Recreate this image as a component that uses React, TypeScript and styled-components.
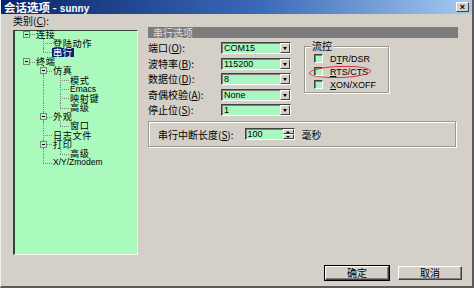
import { Fragment } from "react";
import styled, { createGlobalStyle, css } from "styled-components";

const Global = createGlobalStyle`
  html, body { margin: 0; padding: 0; background: #d4d0c8; }
  body { font-family: "Noto Sans CJK SC", "Liberation Sans", sans-serif; font-size: 10px; color: #000; }
`;

const Window = styled.div`
  position: relative;
  width: 474px; height: 288px; box-sizing: border-box;
  background: #d4d0c8;
  border-right: 2px solid #5a5a5a;
  border-bottom: 2px solid #5a5a5a;
  border-left: 1px solid #f0f0f0;
  display: flex; flex-direction: column;
`;

const TitleBar = styled.div`
  height: 14px; flex: none; overflow: hidden;
  background: linear-gradient(90deg, #0a246a 0%, #3a6ab8 55%, #a6caf0 100%);
  display: flex; align-items: center; padding: 0 3px 0 3px;
  color: #fff; font-weight: 700; font-size: 11.5px;
`;

const TitleText = styled.span`
  flex: 1; white-space: pre; line-height: 14px; height: 14px;
  .mono { font-family: "Liberation Mono", monospace; font-size: 10px; font-weight: 700; }
`;

const CloseBtn = styled.div`
  width: 13px; height: 10px; box-sizing: border-box;
  background: #d4d0c8; border: 1px solid; border-color: #fff #404040 #404040 #fff;
  display: flex; align-items: center; justify-content: center;
  color: #000; font-family: "Liberation Sans", sans-serif; font-size: 9px; font-weight: 700; line-height: 1;
`;

const Content = styled.div`
  display: flex; padding: 1px 0 0 12px;
`;

const LeftCol = styled.div`
  width: 125px; flex: none; display: flex; flex-direction: column;
`;

const Label = styled.div`
  height: 12px; line-height: 12px; margin-bottom: 3px; white-space: nowrap;
`;

const Tree = styled.div`
  height: 225px; box-sizing: border-box;
  background: #aafabe;
  border-left: 2px solid #2e4a36; border-top: 1px solid #2e4a36;
  border-right: 1px solid #f4f4f0; border-bottom: 1px solid #f4f4f0;
  padding: 0 0 0 3px;
`;

const TreeBody = styled.div`
  margin-top: -1.5px;
`;

const TreeRow = styled.div`
  display: flex; height: 9.2px; align-items: stretch;
`;

type Kind = "blank" | "pipe" | "tee" | "elbow" | "minus" | "minusTee";

const dots = "1px dotted #7a8a80";

const Cell = styled.div<{ $kind: Kind }>`
  width: 17px; flex: none; position: relative;
  ${({ $kind }) => ($kind === "pipe" || $kind === "tee" || $kind === "minusTee") && css`
    &::before { content: ""; position: absolute; left: 8px; top: 0; bottom: 0; border-left: ${dots}; }
  `}
  ${({ $kind }) => $kind === "elbow" && css`
    &::before { content: ""; position: absolute; left: 8px; top: 0; height: 50%; border-left: ${dots}; }
  `}
  ${({ $kind }) => $kind !== "blank" && $kind !== "pipe" && css`
    &::after { content: ""; position: absolute; left: 8px; right: 0; top: 50%; border-top: ${dots}; }
  `}
`;

const Expander = styled.span`
  position: absolute; z-index: 1; left: 5px; top: 1px;
  width: 7px; height: 7px; box-sizing: border-box;
  background: #aafabe; border: 1px solid #7a8a80;
  &::after { content: ""; position: absolute; left: 1px; right: 1px; top: 2px; border-top: 1px solid #000; }
`;

const ItemText = styled.span<{ $sel?: boolean; $latin?: boolean }>`
  display: flex; align-items: center; height: 9.2px; overflow: visible;
  padding: 0 1px; white-space: nowrap; line-height: 9px;
  font-family: ${({ $latin }) => ($latin ? '"Liberation Sans", sans-serif' : '"Noto Sans CJK SC", sans-serif')};
  font-size: ${({ $latin }) => ($latin ? "8.5px" : "9.2px")};
  letter-spacing: ${({ $latin }) => ($latin ? "0" : "0.6px")};
  ${({ $sel }) => $sel && css`background: #0a246a; color: #fff;`}
`;

const RightCol = styled.div`
  width: 310px; margin-left: 10px; padding-top: 12px; flex: none;
`;

const SectionHead = styled.div`
  height: 11px; line-height: 11px; background: #7c7c7c; color: #dedede;
  padding-left: 5px;
`;

const FormArea = styled.div`
  display: flex; margin-top: 4px;
`;

const Fields = styled.div`
  display: grid; grid-template-columns: 73px 70px; grid-auto-rows: 12px; row-gap: 3.5px;
  align-items: center;
`;

const FieldLabel = styled.span`
  white-space: nowrap; line-height: 12px;
`;

const sunken = css`
  box-sizing: border-box; border: 1px solid;
  border-color: #404040 #fff #fff #404040;
  box-shadow: inset 1px 1px 0 #808080;
`;

const Combo = styled.div`
  ${sunken};
  height: 12px; background: #a8f7c0; display: flex; align-items: center;
  font-family: "Liberation Sans", sans-serif; font-size: 9px; padding-left: 2px;
`;

const ComboText = styled.span`flex: 1; line-height: 10px;`;

const DropBtn = styled.span`
  width: 10px; height: 10px; box-sizing: border-box; background: #d4d0c8;
  border: 1px solid; border-color: #fff #404040 #404040 #fff;
  display: flex; align-items: center; justify-content: center;
  &::after { content: ""; border: 2.5px solid transparent; border-top: 3px solid #000; border-bottom: 0; margin-top: 1px; }
`;

const Group = styled.div`
  position: relative; box-sizing: border-box;
  border: 1px solid #9a9890; box-shadow: 1px 1px 0 #fff, inset 1px 1px 0 #fff;
`;

const FlowGroup = styled(Group)`
  width: 85px; height: 47px; margin: 4px 0 0 13px; padding: 5px 0 0 9px;
`;

const Legend = styled.span`
  position: absolute; left: 6px; top: -7px; padding: 0 1px; background: #d4d0c8; line-height: 12px;
`;

const CheckRow = styled.div`
  position: relative; height: 13px; display: flex; align-items: center; gap: 7px;
  font-family: "Liberation Sans", sans-serif; font-size: 9px;
  u { text-decoration: underline; }
`;

const CheckBox = styled.span`
  ${sunken};
  width: 9px; height: 9px; background: #a8f7c0; flex: none;
`;

const RedMark = styled.span`
  position: absolute; left: -5px; top: 1px; width: 62px; height: 12px;
  border: 1px solid #e03040; border-radius: 50%; box-sizing: border-box; transform: rotate(-2deg);
`;

const BreakGroup = styled(Group)`
  width: 308px; height: 26px; margin-top: 5px;
  display: flex; align-items: center; padding-left: 9px;
`;

const Spin = styled.div`
  ${sunken};
  width: 50px; height: 12px; margin-left: 11px; background: #a8f7c0;
  display: flex; align-items: stretch;
  font-family: "Liberation Sans", sans-serif; font-size: 9px;
`;

const SpinText = styled.span`flex: 1; padding-left: 2px; line-height: 10px;`;

const SpinArrows = styled.span`
  width: 11px; display: flex; flex-direction: column; background: #d4d0c8;
`;

const SpinArrow = styled.span<{ $up?: boolean }>`
  flex: 1; display: flex; align-items: center; justify-content: center;
  box-sizing: border-box; border: 1px solid; border-color: #fff #404040 #404040 #fff;
  &::after {
    content: ""; border: 2px solid transparent;
    ${({ $up }) => ($up ? "border-bottom: 2px solid #000; border-top: 0;" : "border-top: 2px solid #000; border-bottom: 0;")}
  }
`;

const Unit = styled.span`margin-left: 7px;`;

const ButtonRow = styled.div`
  margin-top: auto; display: flex; justify-content: flex-end; gap: 9px;
  padding: 0 10px 6px 0;
`;

const Button = styled.button<{ $default?: boolean }>`
  width: 64px; height: 14px; box-sizing: border-box; padding: 0;
  background: #d4d0c8; font-family: "Noto Sans CJK SC", sans-serif; font-size: 10px; line-height: 10px; color: #000;
  border: 1px solid; border-color: #fff #404040 #404040 #fff;
  box-shadow: inset -1px -1px 0 #808080;
  ${({ $default }) => $default && css`
    outline: 1px solid #000; outline-offset: 0;
  `}
`;

type Node = { label: string; cells: Kind[]; sel?: boolean; latin?: boolean };

const nodes: Node[] = [
  { label: "连接", cells: ["minus"] },
  { label: "登陆动作", cells: ["blank", "tee"] },
  { label: "串行", cells: ["blank", "elbow"], sel: true },
  { label: "终端", cells: ["minus"] },
  { label: "仿真", cells: ["blank", "minusTee"] },
  { label: "模式", cells: ["blank", "pipe", "tee"] },
  { label: "Emacs", cells: ["blank", "pipe", "tee"], latin: true },
  { label: "映射键", cells: ["blank", "pipe", "tee"] },
  { label: "高级", cells: ["blank", "pipe", "elbow"] },
  { label: "外观", cells: ["blank", "minusTee"] },
  { label: "窗口", cells: ["blank", "pipe", "elbow"] },
  { label: "日志文件", cells: ["blank", "tee"] },
  { label: "打印", cells: ["blank", "minusTee"] },
  { label: "高级", cells: ["blank", "pipe", "elbow"] },
  { label: "X/Y/Zmodem", cells: ["blank", "elbow"], latin: true },
];

const fields = [
  { label: "端口(", key: "O", value: "COM15" },
  { label: "波特率(", key: "B", value: "115200" },
  { label: "数据位(", key: "D", value: "8" },
  { label: "奇偶校验(", key: "A", value: "None" },
  { label: "停止位(", key: "S", value: "1" },
];

export default function App() {
  return (
    <>
      <Global />
      <Window>
        <TitleBar>
          <TitleText>会话选项 - <span className="mono">sunny</span></TitleText>
          <CloseBtn>×</CloseBtn>
        </TitleBar>
        <Content>
          <LeftCol>
            <Label>类别(<u>C</u>):</Label>
            <Tree>
              <TreeBody>
                {nodes.map((n, i) => (
                  <TreeRow key={i}>
                    {n.cells.map((k, j) => (
                      <Cell key={j} $kind={k}>
                        {(k === "minus" || k === "minusTee") && <Expander />}
                      </Cell>
                    ))}
                    <ItemText $sel={n.sel} $latin={n.latin}>{n.label}</ItemText>
                  </TreeRow>
                ))}
              </TreeBody>
            </Tree>
          </LeftCol>
          <RightCol>
            <SectionHead>串行选项</SectionHead>
            <FormArea>
              <Fields>
                {fields.map((f) => (
                  <Fragment key={f.key}>
                    <FieldLabel>{f.label}<u>{f.key}</u>):</FieldLabel>
                    <Combo>
                      <ComboText>{f.value}</ComboText>
                      <DropBtn />
                    </Combo>
                  </Fragment>
                ))}
              </Fields>
              <FlowGroup>
                <Legend>流控</Legend>
                <CheckRow><CheckBox /><span>D<u>T</u>R/DSR</span></CheckRow>
                <CheckRow><RedMark /><CheckBox /><span><u>R</u>TS/CTS</span></CheckRow>
                <CheckRow><CheckBox /><span><u>X</u>ON/XOFF</span></CheckRow>
              </FlowGroup>
            </FormArea>
            <BreakGroup>
              <span>串行中断长度(<u>S</u>):</span>
              <Spin>
                <SpinText>100</SpinText>
                <SpinArrows><SpinArrow $up /><SpinArrow /></SpinArrows>
              </Spin>
              <Unit>毫秒</Unit>
            </BreakGroup>
          </RightCol>
        </Content>
        <ButtonRow>
          <Button $default>确定</Button>
          <Button>取消</Button>
        </ButtonRow>
      </Window>
    </>
  );
}
